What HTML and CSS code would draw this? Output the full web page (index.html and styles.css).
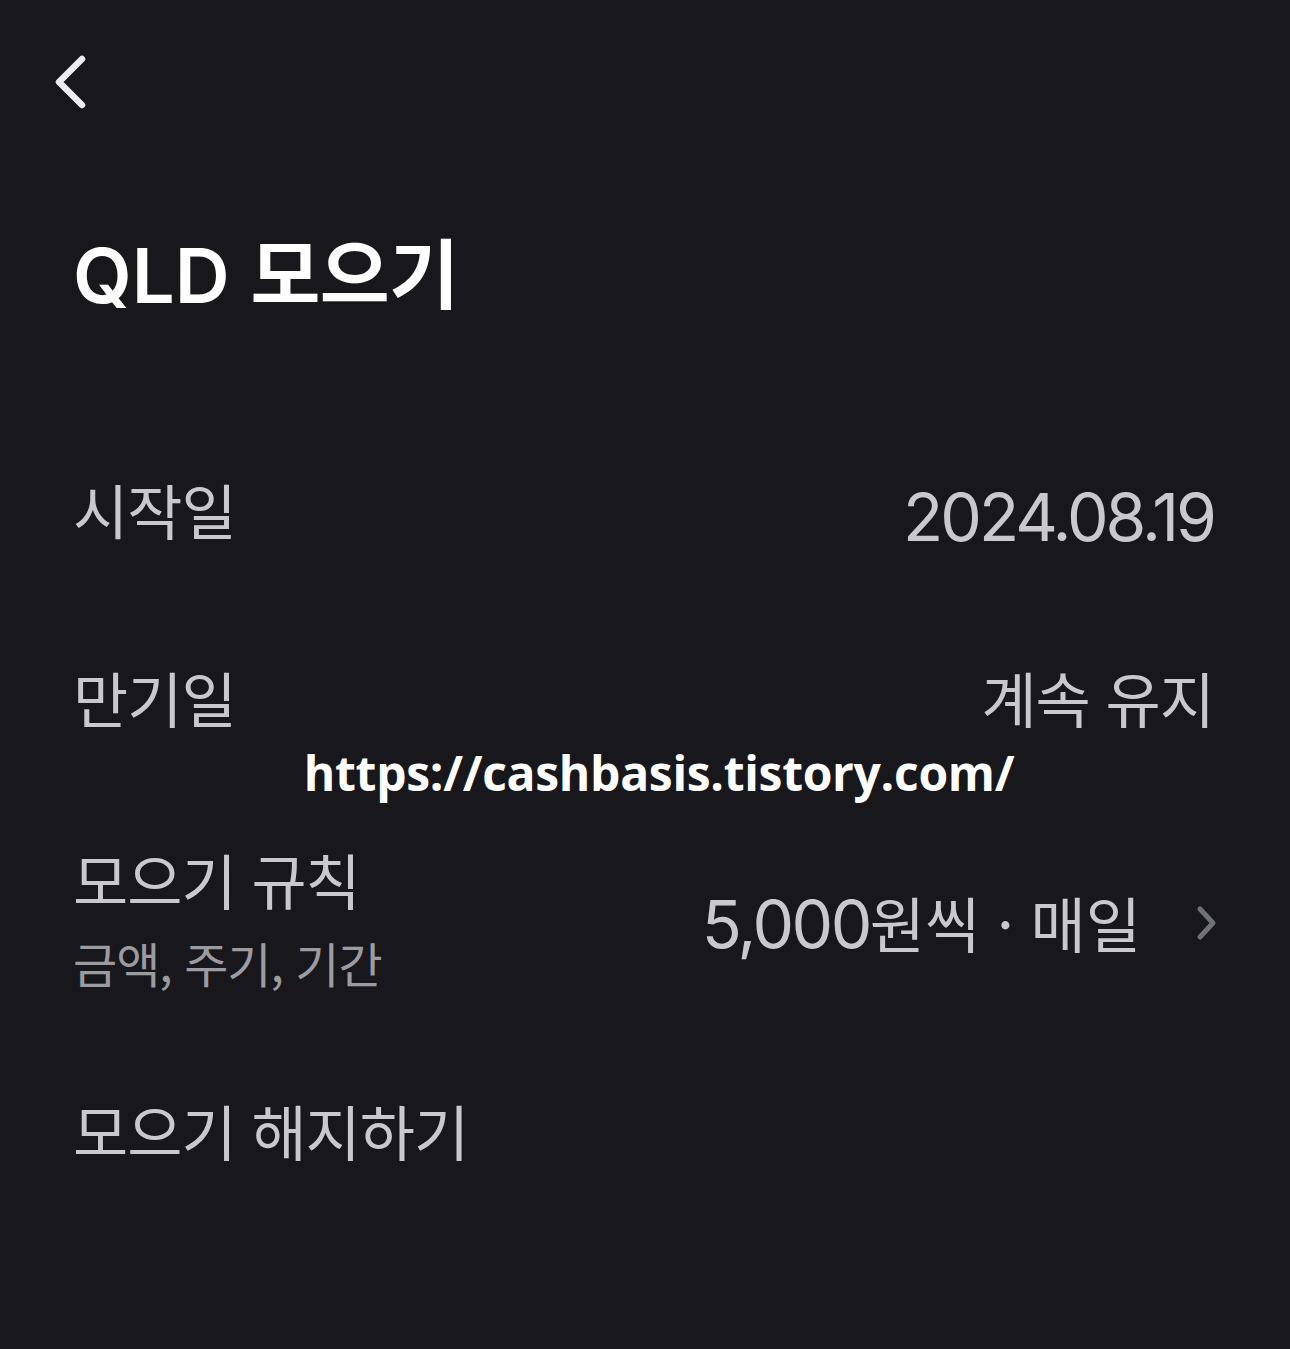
FILE: index.html
```html
<!DOCTYPE html>
<html lang="ko">
<head>
<meta charset="utf-8">
<link rel="stylesheet" href="styles.css">
</head>
<body>
<div class="screen">
  <div class="topbar">
    <svg class="back" width="40" height="56" viewBox="0 0 40 56"><path d="M31 6 L8 29 L31 52" fill="none" stroke="#ececee" stroke-width="6.5" stroke-linecap="round" stroke-linejoin="round"/></svg>
  </div>
  <h1 class="title"><span class="latin">QLD</span> 모으기</h1>
  <div class="list">
    <div class="row r1">
      <span class="label">시작일</span>
      <span class="value num date">2024.08.19</span>
    </div>
    <div class="row r2">
      <span class="label">만기일</span>
      <span class="value">계속 유지</span>
    </div>
    <div class="watermark">https://cashbasis.tistory.com/</div>
    <div class="row r3">
      <div class="labels">
        <span class="label">모으기 규칙</span>
        <span class="sub">금액, 주기, 기간</span>
      </div>
      <div class="rule">
        <span class="value wide"><span class="num">5,000</span>원씩 · 매일</span>
        <svg class="chev" width="24" height="40" viewBox="0 0 24 40"><path d="M5 6 L18 20 L5 34" fill="none" stroke="#707078" stroke-width="5" stroke-linecap="round" stroke-linejoin="round"/></svg>
      </div>
    </div>
    <div class="row r4">
      <span class="label">모으기 해지하기</span>
    </div>
  </div>
</div>
</body>
</html>
```
FILE: styles.css
```css
html, body {
  margin: 0;
  padding: 0;
  background: #18181c;
}
body {
  width: 1290px;
  height: 1349px;
  overflow: hidden;
  font-family: "Noto Sans CJK KR", "Noto Sans", sans-serif;
}
.screen {
  padding: 0 76px 0 73px;
}
.topbar {
  height: 160px;
  display: flex;
  align-items: flex-start;
  padding-top: 53px;
  box-sizing: border-box;
  margin-left: -22px;
}
.title {
  margin: 60px 0 0 0;
  font-size: 76px;
  line-height: 100px;
  font-weight: 700;
  color: #ffffff;
  letter-spacing: -0.5px;
}
.latin {
  font-family: "Inter", "Noto Sans", sans-serif;
  font-weight: 600;
  letter-spacing: 0;
}
.list {
  margin-top: 144px;
  display: flex;
  flex-direction: column;
}
.row {
  display: flex;
  justify-content: space-between;
  align-items: center;
}
.label {
  font-size: 60px;
  line-height: 80px;
  color: #c9c9cd;
  letter-spacing: -1px;
}
.value {
  font-size: 60px;
  line-height: 80px;
  color: #c9c9cd;
  letter-spacing: -1px;
}
.num {
  font-family: "Inter", "Noto Sans", sans-serif;
  font-size: 66px;
  letter-spacing: -3px;
}
.date { margin-top: 8px; margin-bottom: -8px; }
.wide { letter-spacing: 0; }
.wide .num { letter-spacing: -2.5px; }
.r2 { margin-top: 108px; }
.watermark {
  align-self: center;
  margin-top: 6px;
  margin-left: 31px;
  font-family: "Open Sans", sans-serif;
  font-weight: 700;
  font-size: 48px;
  line-height: 60px;
  color: #ffffff;
  letter-spacing: -0.3px;
}
.r3 { margin-top: 36px; }
.labels {
  display: flex;
  flex-direction: column;
}
.sub {
  margin-top: 10px;
  font-size: 48px;
  line-height: 66px;
  color: #9b9ba1;
  letter-spacing: -1px;
}
.rule {
  display: flex;
  align-items: center;
  gap: 54px;
  margin-top: 6px;
  margin-bottom: -6px;
}
.chev { margin-right: -5px; }
.r4 { margin-top: 95px; }
```
